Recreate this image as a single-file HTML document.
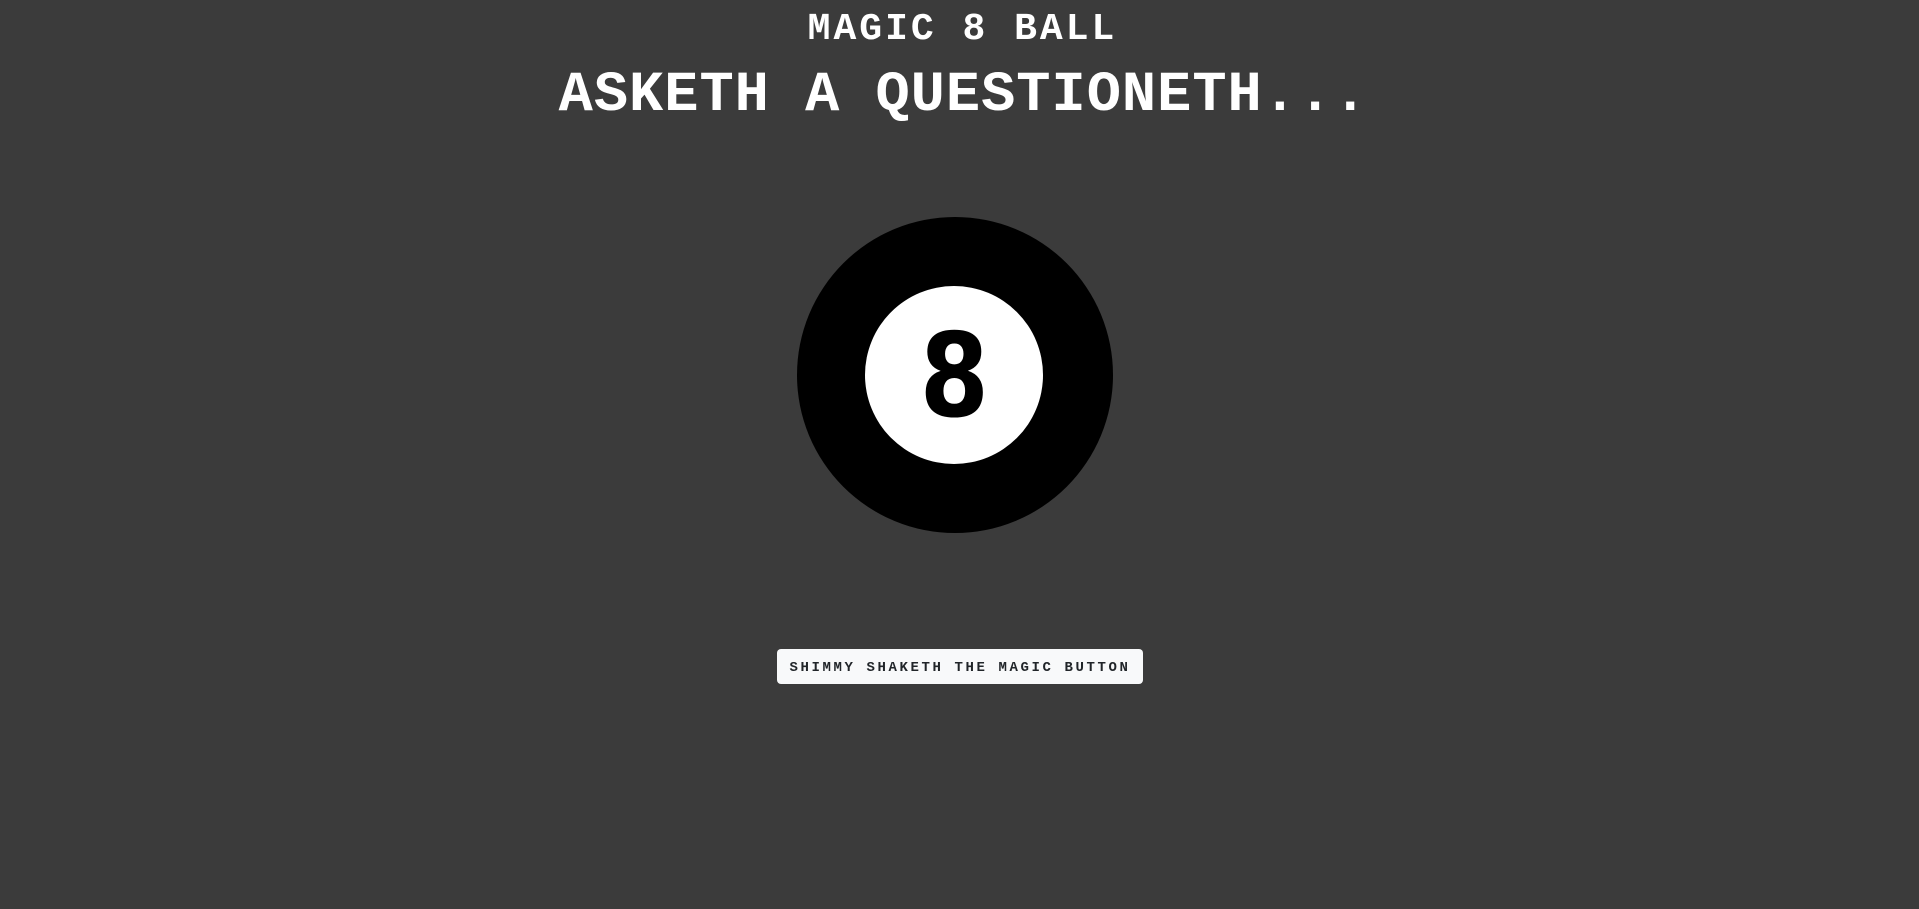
<!DOCTYPE html>
<html><head><style>
html,body{margin:0;padding:0;}
body{width:1919px;height:909px;background:#3b3b3b;position:relative;overflow:hidden;font-family:"Liberation Mono",monospace;}
.t{position:absolute;left:0;width:1919px;text-align:center;color:#fff;font-weight:bold;white-space:nowrap;}
#t1{top:8px;font-size:38px;letter-spacing:3px;line-height:44px;left:3px;}
#t2{top:66px;font-size:57px;letter-spacing:1px;line-height:60px;left:4px;}
#ball{position:absolute;left:797px;top:217px;width:316px;height:316px;border-radius:50%;background:#000;}
#w{position:absolute;left:68px;top:69px;width:178px;height:178px;border-radius:50%;background:#fff;text-align:center;font-family:"DejaVu Sans",sans-serif;font-weight:bold;font-size:116px;line-height:182px;color:#000;}
#w span{display:inline-block;transform:scaleX(0.86);}
#btn{position:absolute;left:777px;top:649px;width:366px;height:35px;background:#f8f9fa;border-radius:4px;color:#212529;font-size:14px;font-weight:bold;line-height:39px;text-align:center;letter-spacing:2.6px;box-sizing:border-box;}
</style></head><body>
<div class="t" id="t1">MAGIC 8 BALL</div>
<div class="t" id="t2">ASKETH A QUESTIONETH...</div>
<div id="ball"><div id="w"><span>8</span></div></div>
<div id="btn">SHIMMY SHAKETH THE MAGIC BUTTON</div>
</body></html>
